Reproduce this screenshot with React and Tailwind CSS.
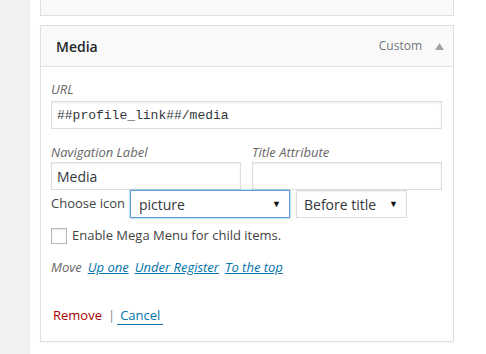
export default function App() {
  return (
    <div className="flex h-[354px] w-[486px] overflow-hidden bg-white font-['Open_Sans',sans-serif] text-[13px] text-[#444]">
      <div className="w-[30px] shrink-0 bg-[#f1f1f1]" />
      <div className="ml-[10px] flex w-[414px] shrink-0 flex-col">
        {/* previous item, mostly scrolled away */}
        <div className="-mt-[27px] flex h-[43px] items-center border border-[#dfdfdf] bg-[#f9f9f9] pl-[15px]">
          <span className="mt-[-14px] text-[14px] font-semibold text-[#23282d]">Blog</span>
        </div>

        {/* open menu item */}
        <div className="mt-[9px] border border-[#dfdfdf] shadow-[0_1px_1px_rgba(0,0,0,0.04)]">
          <div className="flex h-[41px] items-center border-b border-[#dfdfdf] bg-[#f9f9f9] pl-[15px] pr-[9px]">
            <span className="text-[14px] font-semibold text-[#23282d]">Media</span>
            <span className="ml-auto text-[12px] text-[#72777c]">Custom</span>
            <svg width="9" height="7" viewBox="0 0 9 7" className="ml-[13px]">
              <polygon points="4.5,0 9,7 0,7" fill="#a0a5aa" />
            </svg>
          </div>

          <div className="flex h-[274px] flex-col bg-white pl-[10px] pr-[11px]">
            <label className="mt-[13px] block text-[13px] italic leading-[18px] text-[#666]">URL</label>
            <input
              readOnly
              value="##profile_link##/media"
              className="mt-[3px] h-[28px] w-[391px] border border-[#ddd] px-[5px] font-['Liberation_Mono',monospace] text-[13px] text-[#32373c] shadow-[inset_0_1px_2px_rgba(0,0,0,0.07)] outline-none"
            />

            <div className="mt-[14px] flex gap-[11px]">
              <div className="flex w-[190px] flex-col">
                <label className="text-[13px] italic leading-[18px] text-[#666]">Navigation Label</label>
                <input
                  readOnly
                  value="Media"
                  className="mt-[1px] h-[28px] w-[190px] border border-[#ddd] px-[5px] text-[14px] text-[#32373c] shadow-[inset_0_1px_2px_rgba(0,0,0,0.07)] outline-none"
                />
              </div>
              <div className="flex w-[190px] flex-col">
                <label className="text-[13px] italic leading-[18px] text-[#666]">Title Attribute</label>
                <input
                  readOnly
                  value=""
                  className="mt-[1px] h-[28px] w-[190px] border border-[#ddd] px-[5px] text-[14px] text-[#32373c] shadow-[inset_0_1px_2px_rgba(0,0,0,0.07)] outline-none"
                />
              </div>
            </div>

            <div className="mt-0 flex items-center">
              <span className="text-[13px] text-[#444]">Choose icon</span>
              <div className="ml-[5px] flex h-[28px] w-[160px] items-center border border-[#5b9dd9] pl-[8px] pr-[8px] text-[14px] text-[#32373c] shadow-[0_0_2px_rgba(30,140,190,0.8)]">
                <span>picture</span>
                <span className="ml-auto text-[9px] text-[#111]">▼</span>
              </div>
              <div className="ml-[6px] flex h-[28px] w-[111px] items-center border border-[#ddd] pl-[7px] pr-[8px] text-[14px] text-[#32373c] shadow-[inset_0_1px_2px_rgba(0,0,0,0.07)]">
                <span>Before title</span>
                <span className="ml-auto text-[9px] text-[#111]">▼</span>
              </div>
            </div>

            <div className="mt-[8px] flex items-center">
              <span className="h-[16px] w-[16px] border border-[#b4b9be] bg-white shadow-[inset_0_1px_2px_rgba(0,0,0,0.1)]" />
              <span className="ml-[5px] text-[13px] text-[#444]">Enable Mega Menu for child items.</span>
            </div>

            <div className="mt-[12px] flex items-center gap-[6px] text-[13px] italic">
              <span className="text-[#666]">Move</span>
              <span className="text-[#0073aa] underline">Up one</span>
              <span className="text-[#0073aa] underline">Under Register</span>
              <span className="text-[#0073aa] underline">To the top</span>
            </div>

            <div className="mt-[29px] flex items-center text-[13px]">
              <span className="ml-[2px] text-[#a00]">Remove</span>
              <span className="ml-[6px] text-[#82878c]">|</span>
              <span className="ml-[2px] border-b border-[#0073aa] px-[3px] leading-[18px] text-[#0073aa]">Cancel</span>
            </div>
          </div>
        </div>
      </div>
    </div>
  );
}
